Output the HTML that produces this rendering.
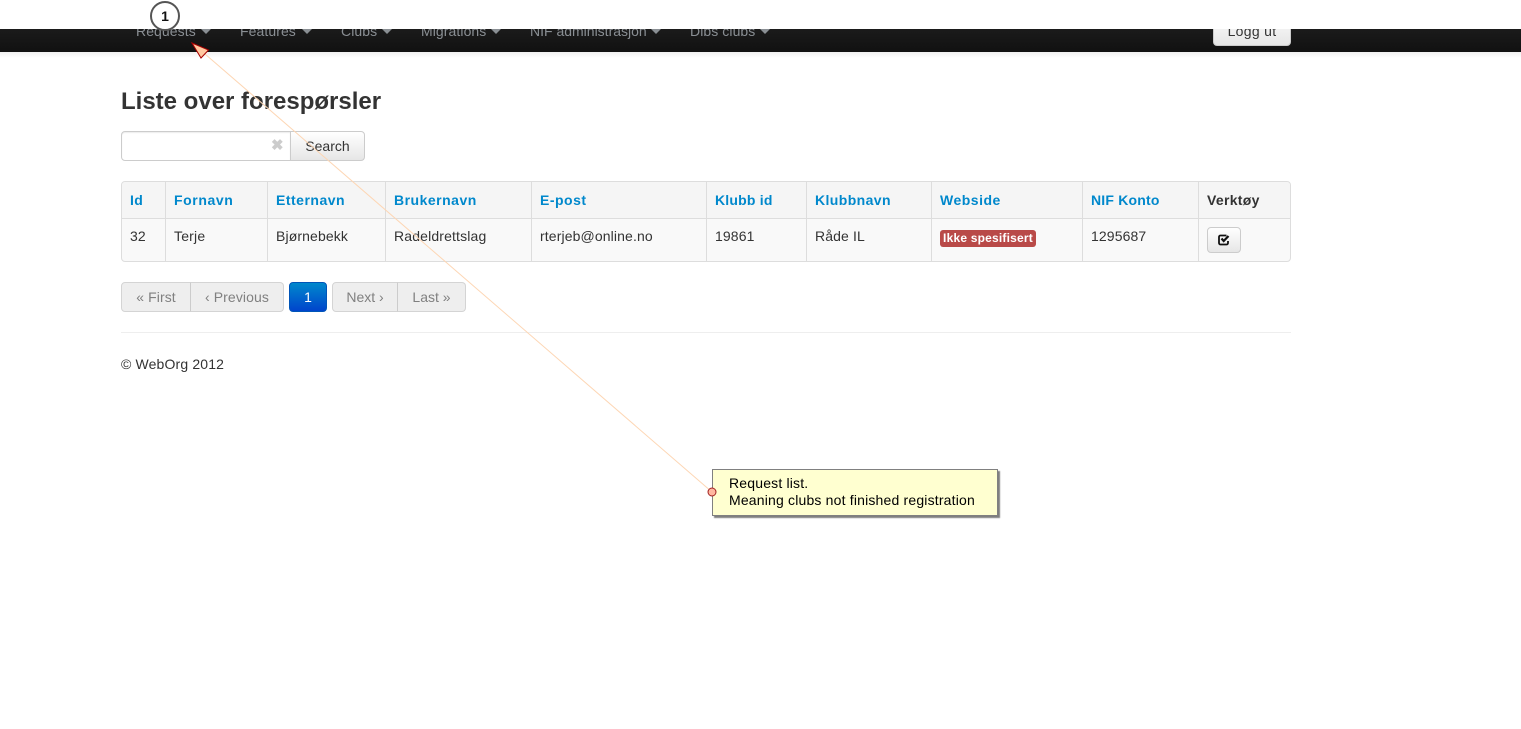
<!DOCTYPE html>
<html><head><meta charset="utf-8"><title>Liste over forespørsler</title>
<style>
html,body{margin:0;padding:0;background:#fff;}
body{width:1521px;height:729px;overflow:hidden;position:relative;font-family:"Liberation Sans",sans-serif;font-size:14px;color:#333;}
.a{position:absolute;white-space:nowrap;}
#nav{left:0;top:29px;width:1521px;height:23px;background:linear-gradient(#1b1b1b,#111);overflow:hidden;}
#navs{left:0;top:52px;width:1521px;height:6px;background:linear-gradient(#f0f0f0,#fff);}
.n{color:#8a8f94;font-size:14px;line-height:20px;top:-8px;letter-spacing:.08px;}
.c{top:0;width:0;height:0;border-left:5px solid transparent;border-right:5px solid transparent;border-top:5px solid #8a8f94;}
#logg{left:1213px;top:-20px;width:76px;height:35px;background:linear-gradient(#fff,#e6e6e6);border:1px solid #ccc;border-radius:4px;text-align:center;line-height:42px;color:#333;letter-spacing:.3px;}
h1{position:absolute;margin:0;left:121px;top:88px;font-size:24px;line-height:28px;font-weight:bold;color:#333;}
#inp{left:121px;top:131px;width:168px;height:28px;border:1px solid #ccc;border-radius:4px 0 0 4px;background:#fff;box-shadow:inset 0 1px 1px rgba(0,0,0,.08);}
#btn{left:290px;top:131px;width:73px;height:28px;border:1px solid #ccc;border-radius:0 4px 4px 0;background:linear-gradient(#fff,#e6e6e6);text-align:center;line-height:28px;color:#333;}
#x{left:271px;top:136px;font-size:15px;line-height:20px;font-weight:bold;color:#ccc;}
#tb{left:121px;top:181px;width:1168px;height:79px;border:1px solid #ddd;border-radius:4px;background:#f9f9f9;overflow:hidden;}
#th{left:0;top:0;width:1168px;height:36px;background:#f5f5f5;border-bottom:1px solid #ddd;}
.v{top:0;width:1px;height:79px;background:#ddd;}
.h{top:191px;font-weight:bold;color:#0088cc;line-height:18px;letter-spacing:.4px;}
.d{top:227px;line-height:18px;color:#333;letter-spacing:.12px;}
#lab{left:940px;top:230px;width:96px;height:17px;background:#b94a48;border-radius:3px;color:#fff;font-size:12px;font-weight:bold;line-height:17px;text-align:center;letter-spacing:.2px;}
#tool{left:1207px;top:227px;width:32px;height:24px;border:1px solid #ccc;border-radius:4px;background:linear-gradient(#fff,#e6e6e6);}
.p{top:282px;height:28px;border:1px solid #d4d4d4;background:#eee;color:#808080;line-height:29px;text-align:center;}
#hr{left:121px;top:332px;width:1170px;height:1px;background:#eee;}
#note{left:712px;top:469px;height:47px;background:#ffffd0;border:1px solid #808080;box-sizing:border-box;box-shadow:2px 2px 1px #7f7f7f;color:#000;font-size:14px;line-height:17px;padding:5px 0 0 16px;width:286px;letter-spacing:.18px;}
#circ{left:150px;top:1px;width:26px;height:26px;border:2px solid #555;border-radius:50%;background:#fff;text-align:center;line-height:26px;font-size:14px;font-weight:bold;color:#111;}
svg{position:absolute;left:0;top:0;}
</style></head>
<body>
<div class="a" id="navs"></div>
<div class="a" id="nav">
<span class="a n" style="left:136px">Requests</span><span class="a c" style="left:201px"></span>
<span class="a n" style="left:240px">Features</span><span class="a c" style="left:302px"></span>
<span class="a n" style="left:341px">Clubs</span><span class="a c" style="left:382px"></span>
<span class="a n" style="left:421px">Migrations</span><span class="a c" style="left:491px"></span>
<span class="a n" style="left:530px;letter-spacing:0">NIF administrasjon</span><span class="a c" style="left:651px"></span>
<span class="a n" style="left:690px">Dibs clubs</span><span class="a c" style="left:760px"></span>
<div class="a" id="logg">Logg ut</div>
</div>

<h1>Liste over forespørsler</h1>
<div class="a" id="inp"></div><div class="a" id="x">✖</div>
<div class="a" id="btn">Search</div>

<div class="a" id="tb">
<div class="a" id="th"></div>
<div class="a v" style="left:43px"></div>
<div class="a v" style="left:145px"></div>
<div class="a v" style="left:263px"></div>
<div class="a v" style="left:409px"></div>
<div class="a v" style="left:584px"></div>
<div class="a v" style="left:684px"></div>
<div class="a v" style="left:809px"></div>
<div class="a v" style="left:960px"></div>
<div class="a v" style="left:1076px"></div>
</div>
<span class="a h" style="left:130px">Id</span>
<span class="a h" style="left:174px;letter-spacing:.6px">Fornavn</span>
<span class="a h" style="left:276px;letter-spacing:.5px">Etternavn</span>
<span class="a h" style="left:394px;letter-spacing:.5px">Brukernavn</span>
<span class="a h" style="left:540px;letter-spacing:.5px">E-post</span>
<span class="a h" style="left:715px;letter-spacing:.2px">Klubb id</span>
<span class="a h" style="left:815px;letter-spacing:.4px">Klubbnavn</span>
<span class="a h" style="left:940px;letter-spacing:.5px">Webside</span>
<span class="a h" style="left:1091px;letter-spacing:.2px">NIF Konto</span>
<span class="a h" style="left:1207px;color:#333;letter-spacing:.3px">Verktøy</span>
<span class="a d" style="left:130px">32</span>
<span class="a d" style="left:174px;letter-spacing:.2px">Terje</span>
<span class="a d" style="left:276px">Bjørnebekk</span>
<span class="a d" style="left:394px;letter-spacing:.15px">Radeldrettslag</span>
<span class="a d" style="left:540px">rterjeb@online.no</span>
<span class="a d" style="left:715px">19861</span>
<span class="a d" style="left:815px">Råde IL</span>
<div class="a" id="lab">Ikke spesifisert</div>
<span class="a d" style="left:1091px">1295687</span>
<div class="a" id="tool"></div>
<svg width="1521" height="729" viewBox="0 0 1521 729" style="pointer-events:none">
<path d="M1226.500 235.500h-6a1.500 1.500 0 0 0-1.500 1.500v6a1.500 1.500 0 0 0 1.500 1.500h6a1.500 1.500 0 0 0 1.500-1.500v-2" fill="none" stroke="#111" stroke-width="1.800"/>
<path d="M1221.500 238.500l2.200 2.500 4.800-5" fill="none" stroke="#111" stroke-width="2.200"/>
</svg>

<div class="a p" style="left:121px;top:282px;width:68px;border-radius:4px 0 0 4px;letter-spacing:.1px">« First</div>
<div class="a p" style="left:190px;width:92px;border-left:1px solid #ccc;border-radius:0 4px 4px 0;letter-spacing:.1px">‹ Previous</div>
<div class="a p" style="left:289px;width:36px;border-color:#0055b8;border-radius:4px;background:linear-gradient(#0088cc,#0044cc);color:#fff">1</div>
<div class="a p" style="left:332px;width:64px;border-radius:4px 0 0 4px">Next ›</div>
<div class="a p" style="left:397px;width:67px;border-left:1px solid #ccc;border-radius:0 4px 4px 0">Last »</div>

<div class="a" id="hr"></div>
<span class="a" style="left:121px;top:355px;line-height:18px;letter-spacing:.15px">© WebOrg 2012</span>

<div class="a" id="note">Request list.<br>Meaning clubs not finished registration</div>

<svg width="1521" height="729" viewBox="0 0 1521 729">
<line x1="205" y1="54" x2="712" y2="492" stroke="#fdd6b4" stroke-width="1"/>
<polygon points="192,43 208.500,50 201,58" fill="#ffc8a0" stroke="#a80000" stroke-width="1"/>
<circle cx="712" cy="492" r="4" fill="#ffb8a0" stroke="#a02020" stroke-width="1"/>
</svg>
<div class="a" id="circ">1</div>
</body></html>
